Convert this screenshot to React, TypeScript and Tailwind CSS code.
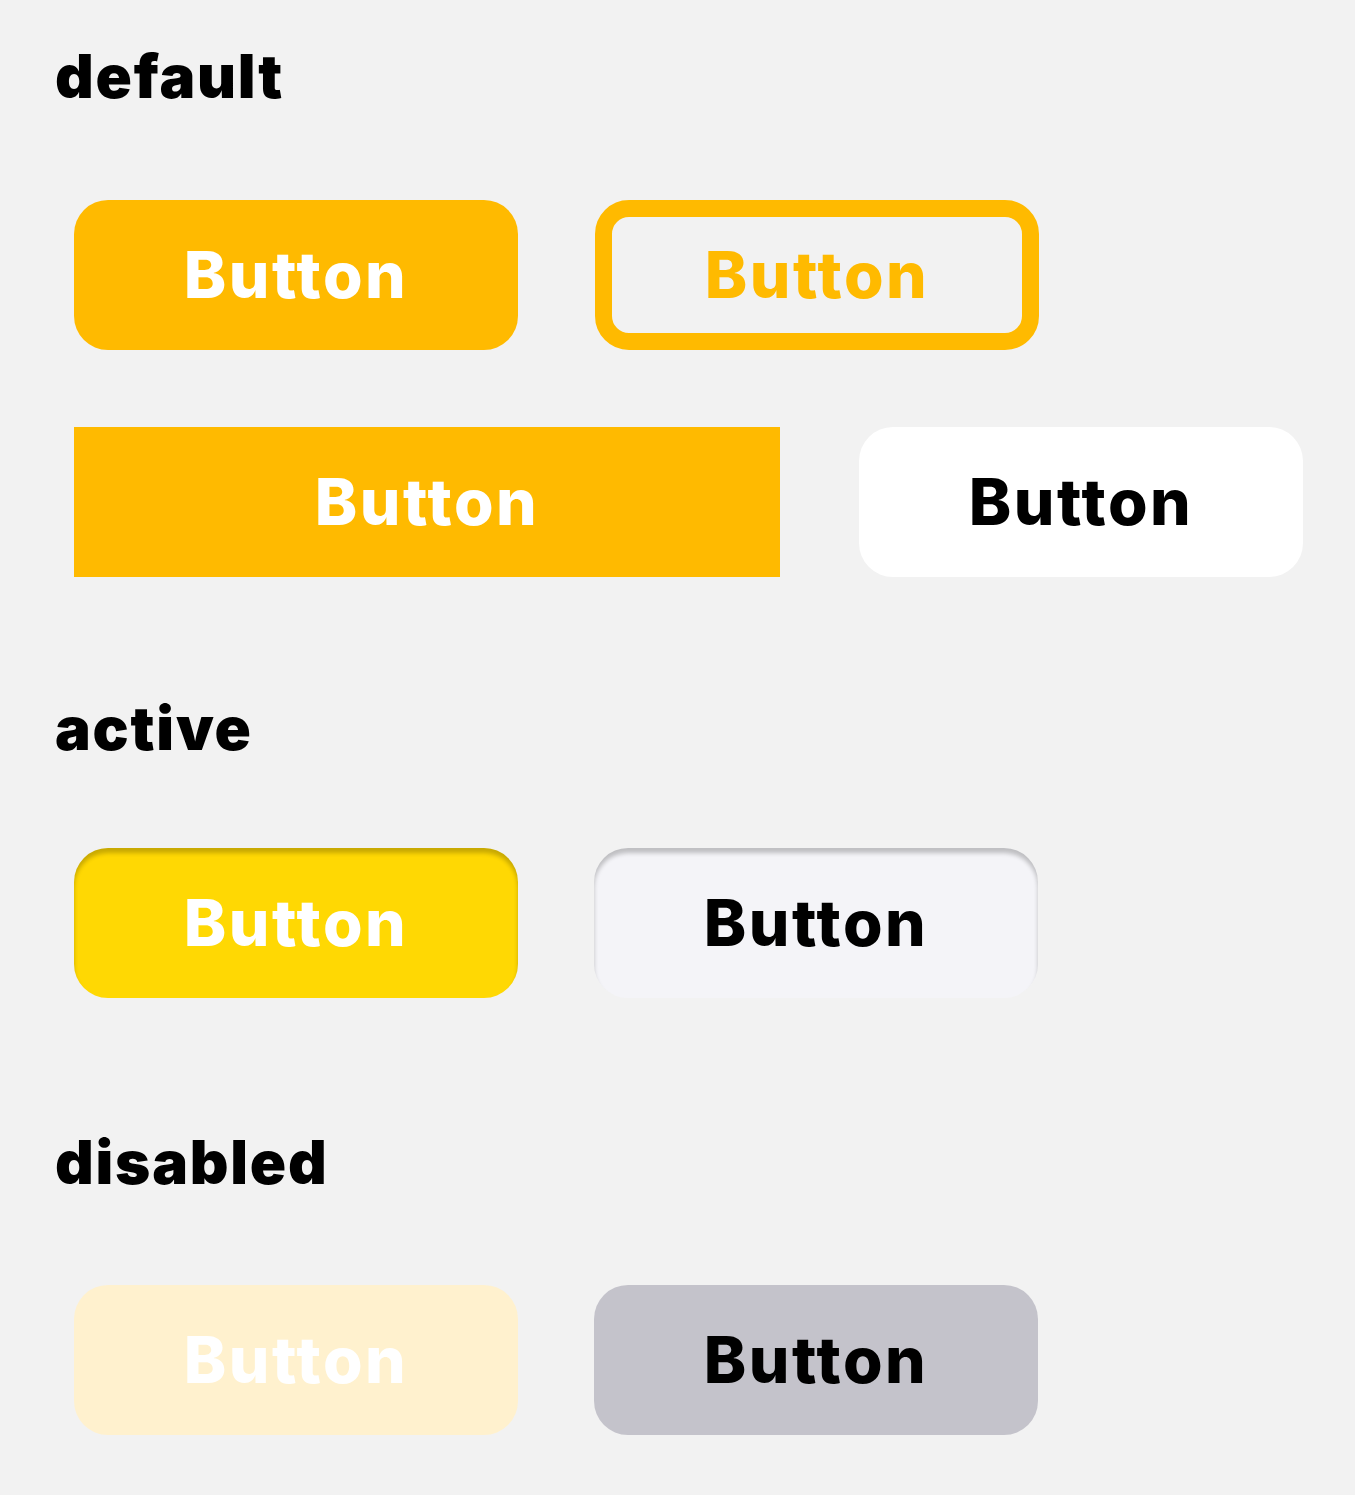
import React from "react";

const font = { fontFamily: "Inter, 'Noto Sans', sans-serif" };

function Heading({ children }: { children: React.ReactNode }) {
  return (
    <h2 className="pl-[55px] text-[60px] font-black leading-none tracking-[0.03em] text-black">
      {children}
    </h2>
  );
}

function Btn({ className, children }: { className: string; children?: React.ReactNode }) {
  return (
    <button
      type="button"
      className={`flex h-[150px] items-center justify-center text-[64px] font-extrabold leading-none tracking-[0.04em] ${className}`}
    >
      {children ?? "Button"}
    </button>
  );
}

export default function App() {
  return (
    <div className="min-h-[1495px] w-[1355px] bg-[#f2f2f2] pt-[46px]" style={font}>
      {/* default */}
      <Heading>default</Heading>
      <div className="mt-[94px] flex flex-col gap-[77px] pl-[74px]">
        <div className="flex gap-[77px]">
          <Btn className="w-[444px] rounded-[34px] bg-[#ffba00] text-white" />
          <Btn className="w-[444px] rounded-[34px] border-[17px] border-[#ffba00] text-[#ffba00]" />
        </div>
        <div className="flex gap-[79px]">
          <Btn className="w-[706px] bg-[#ffba00] text-white" />
          <Btn className="w-[444px] rounded-[34px] bg-white text-black" />
        </div>
      </div>

      {/* active */}
      <div className="mt-[121px]">
        <Heading>active</Heading>
      </div>
      <div className="mt-[90px] flex gap-[76px] pl-[74px]">
        <Btn className="w-[444px] rounded-[34px] bg-[#ffd803] text-white shadow-[inset_0_5px_4px_rgba(0,0,0,0.22)]" />
        <Btn className="w-[444px] rounded-[34px] bg-[#f4f4f8] text-black shadow-[inset_0_5px_4px_rgba(0,0,0,0.22)]" />
      </div>

      {/* disabled */}
      <div className="mt-[134px]">
        <Heading>disabled</Heading>
      </div>
      <div className="mt-[93px] flex gap-[76px] pl-[74px]">
        <Btn className="w-[444px] rounded-[34px] bg-[#fff1ce] text-white" />
        <Btn className="w-[444px] rounded-[34px] bg-[#c4c3cb] text-black" />
      </div>
    </div>
  );
}
